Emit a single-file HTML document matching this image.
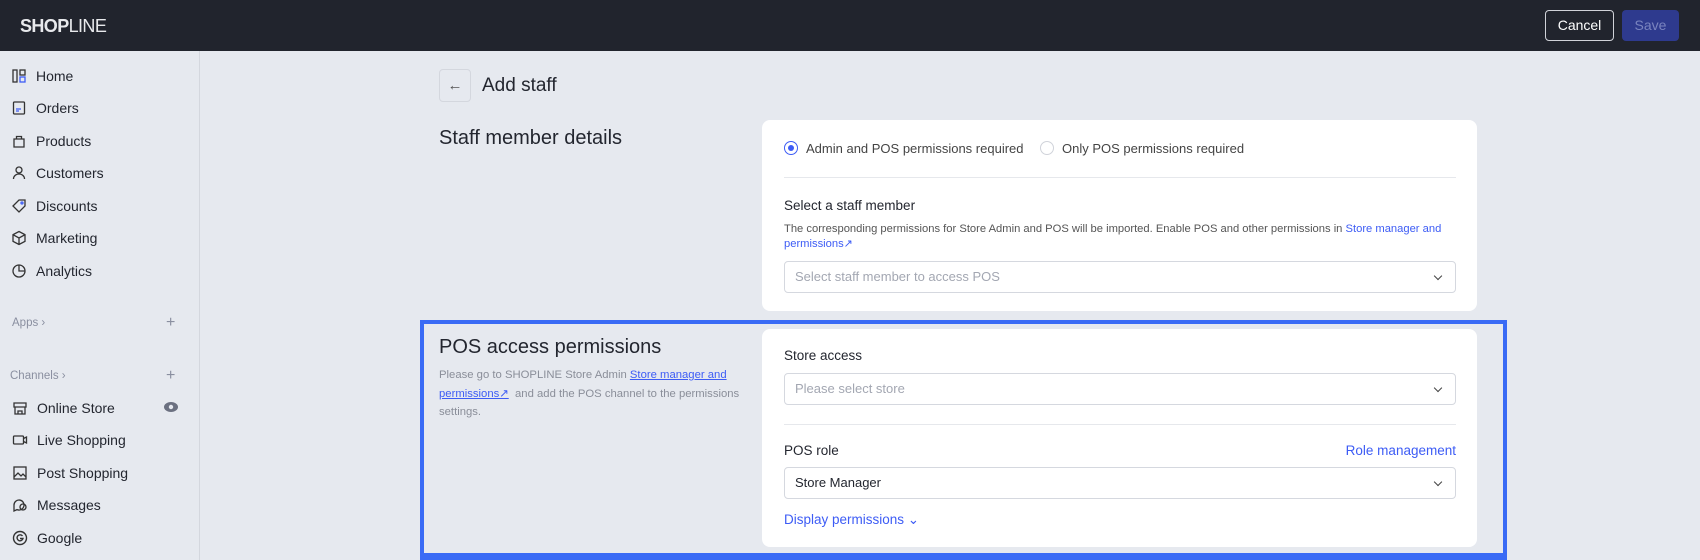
<!DOCTYPE html>
<html><head><meta charset="utf-8"><style>
*{box-sizing:border-box;margin:0;padding:0}
body{width:1700px;height:560px;overflow:hidden;background:#e6e9ef;font-family:"Liberation Sans",sans-serif;color:#23262f;position:relative}
.hdr{position:absolute;left:0;top:0;width:1700px;height:51px;background:#21242d}
.logo{position:absolute;left:20px;top:16px;color:#e8e9ec;font-size:18px;font-weight:bold;letter-spacing:-0.6px}
.logo span{font-weight:normal}
.btn{position:absolute;top:10px;height:31px;border-radius:4px;font-size:14px;text-align:center;line-height:29px}
.cancel{left:1545px;width:69px;border:1px solid #d0d2d8;color:#fff}
.save{left:1622px;width:57px;background:#2e3a8e;color:#7a84bf;line-height:31px}
.side{position:absolute;left:0;top:51px;width:200px;height:509px;border-right:1px solid #d4d7de}
.nav{position:absolute;left:11px;font-size:14px;color:#23262f;display:flex;align-items:center;height:20px}
.nav svg{width:16px;height:16px;margin-right:9px}
.sec{position:absolute;font-size:11.5px;color:#8a8fa0}
.plus{position:absolute;left:166px;font-size:16px;color:#8a8fa0}
.title{position:absolute;font-size:20px;color:#23262f}
.back{position:absolute;left:439px;top:69px;width:32px;height:33px;border:1px solid #d4d7de;border-radius:4px;text-align:center;line-height:31px;font-size:15px;color:#555}
.card{position:absolute;left:762px;width:715px;background:#fff;border-radius:8px}
.lbl{position:absolute;font-size:13.5px;color:#23262f}
.sel{position:absolute;left:22px;width:672px;height:32px;border:1px solid #d5d8df;border-radius:4px;font-size:13px;color:#a3a7b2;padding-left:10px;line-height:30px}
.sel:after{content:"";position:absolute;right:14px;top:11px;width:5px;height:5px;border-right:1.5px solid #444;border-bottom:1.5px solid #444;transform:rotate(45deg)}
.div{position:absolute;left:22px;width:672px;height:1px;background:#e6e8ec}
a,.lk{color:#3d5cf5;text-decoration:none}
</style></head><body>
<div class="hdr"><div class="logo">SHOP<span>LINE</span></div>
<div class="btn cancel">Cancel</div><div class="btn save">Save</div></div>
<div class="side">
<div class="nav" style="top:15px"><svg viewBox="0 0 16 16" fill="none" stroke="#333" stroke-width="1.3"><rect x="2" y="2" width="4" height="12"/><rect x="9" y="2" width="5" height="5"/><rect x="9" y="9" width="5" height="5" stroke="#3d5cf5"/></svg>Home</div>
<div class="nav" style="top:47px"><svg viewBox="0 0 16 16" fill="none" stroke="#333" stroke-width="1.3"><rect x="2.5" y="2" width="11" height="12" rx="1"/><path d="M5 9h5M5 11h3" stroke="#3d5cf5"/></svg>Orders</div>
<div class="nav" style="top:80px"><svg viewBox="0 0 16 16" fill="none" stroke="#333" stroke-width="1.3"><path d="M3 6h10v8H3zM5.5 6V3.5h5V6"/></svg>Products</div>
<div class="nav" style="top:112px"><svg viewBox="0 0 16 16" fill="none" stroke="#333" stroke-width="1.3"><circle cx="8" cy="5" r="3"/><path d="M2.5 14c0-3 2.5-5 5.5-5s5.5 2 5.5 5"/></svg>Customers</div>
<div class="nav" style="top:145px"><svg viewBox="0 0 16 16" fill="none" stroke="#333" stroke-width="1.3"><path d="M2 8l6-6h6v6l-6 6z"/><circle cx="11" cy="5" r="1" stroke="#3d5cf5"/></svg>Discounts</div>
<div class="nav" style="top:177px"><svg viewBox="0 0 16 16" fill="none" stroke="#333" stroke-width="1.3"><path d="M8 1.5l6 3.2v6.6L8 14.5l-6-3.2V4.7zM2 4.7l6 3.3 6-3.3M8 8v6.5"/></svg>Marketing</div>
<div class="nav" style="top:210px"><svg viewBox="0 0 16 16" fill="none" stroke="#333" stroke-width="1.3"><circle cx="8" cy="8" r="6"/><path d="M8 2v6h6"/></svg>Analytics</div>
<div class="sec" style="left:12px;top:266px">Apps ›</div><div class="plus" style="top:263px">+</div>
<div class="sec" style="left:10px;top:319px">Channels ›</div><div class="plus" style="top:316px">+</div>
<div class="nav" style="top:347px;left:12px"><svg viewBox="0 0 16 16" fill="none" stroke="#333" stroke-width="1.3"><path d="M2 3h12v4H2zM3 7v7h10V7M6 14v-3h4v3"/></svg>Online Store</div>
<svg style="position:absolute;left:164px;top:351px" width="14" height="10" viewBox="0 0 14 10"><ellipse cx="7" cy="5" rx="7" ry="5" fill="#6b7080"/><circle cx="7" cy="5" r="2.2" fill="#e6e9ef"/></svg>
<div class="nav" style="top:379px;left:12px"><svg viewBox="0 0 16 16" fill="none" stroke="#333" stroke-width="1.3"><rect x="1.5" y="4" width="10" height="8" rx="1"/><path d="M11.5 6.5l3-1.5v6l-3-1.5"/></svg>Live Shopping</div>
<div class="nav" style="top:412px;left:12px"><svg viewBox="0 0 16 16" fill="none" stroke="#333" stroke-width="1.3"><rect x="2" y="2" width="12" height="12"/><path d="M2 12l4-4 3 3 2-2 3 3"/></svg>Post Shopping</div>
<div class="nav" style="top:444px;left:12px"><svg viewBox="0 0 16 16" fill="none" stroke="#333" stroke-width="1.3"><path d="M2 8a5 5 0 1 1 3 4.6L2 14z"/><circle cx="11" cy="10" r="3"/></svg>Messages</div>
<div class="nav" style="top:477px;left:12px"><svg viewBox="0 0 16 16" fill="none" stroke="#333" stroke-width="1.4"><circle cx="8" cy="8" r="6.5"/><path d="M10.5 6A3 3 0 1 0 11 8.5H8"/></svg>Google</div>
</div>

<div class="back">←</div>
<div class="title" style="left:482px;top:75px;font-size:19px">Add staff</div>
<div class="title" style="left:439px;top:127px;font-weight:500">Staff member details</div>

<div class="card" style="top:120px;height:191px">
<div style="position:absolute;left:22px;top:21px;width:14px;height:14px;border:1px solid #3d5cf5;border-radius:50%"><div style="margin:3px;width:6px;height:6px;border-radius:50%;background:#3d5cf5"></div></div>
<div class="lbl" style="left:44px;top:21px;color:#444;font-size:13px">Admin and POS permissions required</div>
<div style="position:absolute;left:278px;top:21px;width:14px;height:14px;border:1px solid #d0d3da;border-radius:50%"></div>
<div class="lbl" style="left:300px;top:21px;color:#444;font-size:13px">Only POS permissions required</div>
<div class="div" style="top:57px"></div>
<div class="lbl" style="left:22px;top:78px">Select a staff member</div>
<div style="position:absolute;left:22px;top:102px;width:680px;font-size:11.2px;line-height:15px;color:#555">The corresponding permissions for Store Admin and POS will be imported. Enable POS and other permissions in <span class="lk">Store manager and permissions↗</span></div>
<div class="sel" style="top:141px">Select staff member to access POS</div>
</div>

<div style="position:absolute;left:420px;top:320px;width:1087px;height:240px;border:4px solid #3a6bf5;border-bottom-width:7px"></div>
<div class="title" style="left:439px;top:336px">POS access permissions</div>
<div style="position:absolute;left:439px;top:366px;width:315px;font-size:11.3px;line-height:18.5px;color:#8a8e99">Please go to SHOPLINE Store Admin <a style="text-decoration:underline">Store manager and permissions↗</a>&nbsp; and add the POS channel to the permissions settings.</div>

<div class="card" style="top:329px;height:218px">
<div class="lbl" style="left:22px;top:19px">Store access</div>
<div class="sel" style="top:44px">Please select store</div>
<div class="div" style="top:95px"></div>
<div class="lbl" style="left:22px;top:114px">POS role</div>
<div class="lbl lk" style="right:21px;top:114px">Role management</div>
<div class="sel" style="top:138px;color:#23262f">Store Manager</div>
<div class="lbl lk" style="left:22px;top:183px">Display permissions ⌄</div>
</div>
</body></html>
